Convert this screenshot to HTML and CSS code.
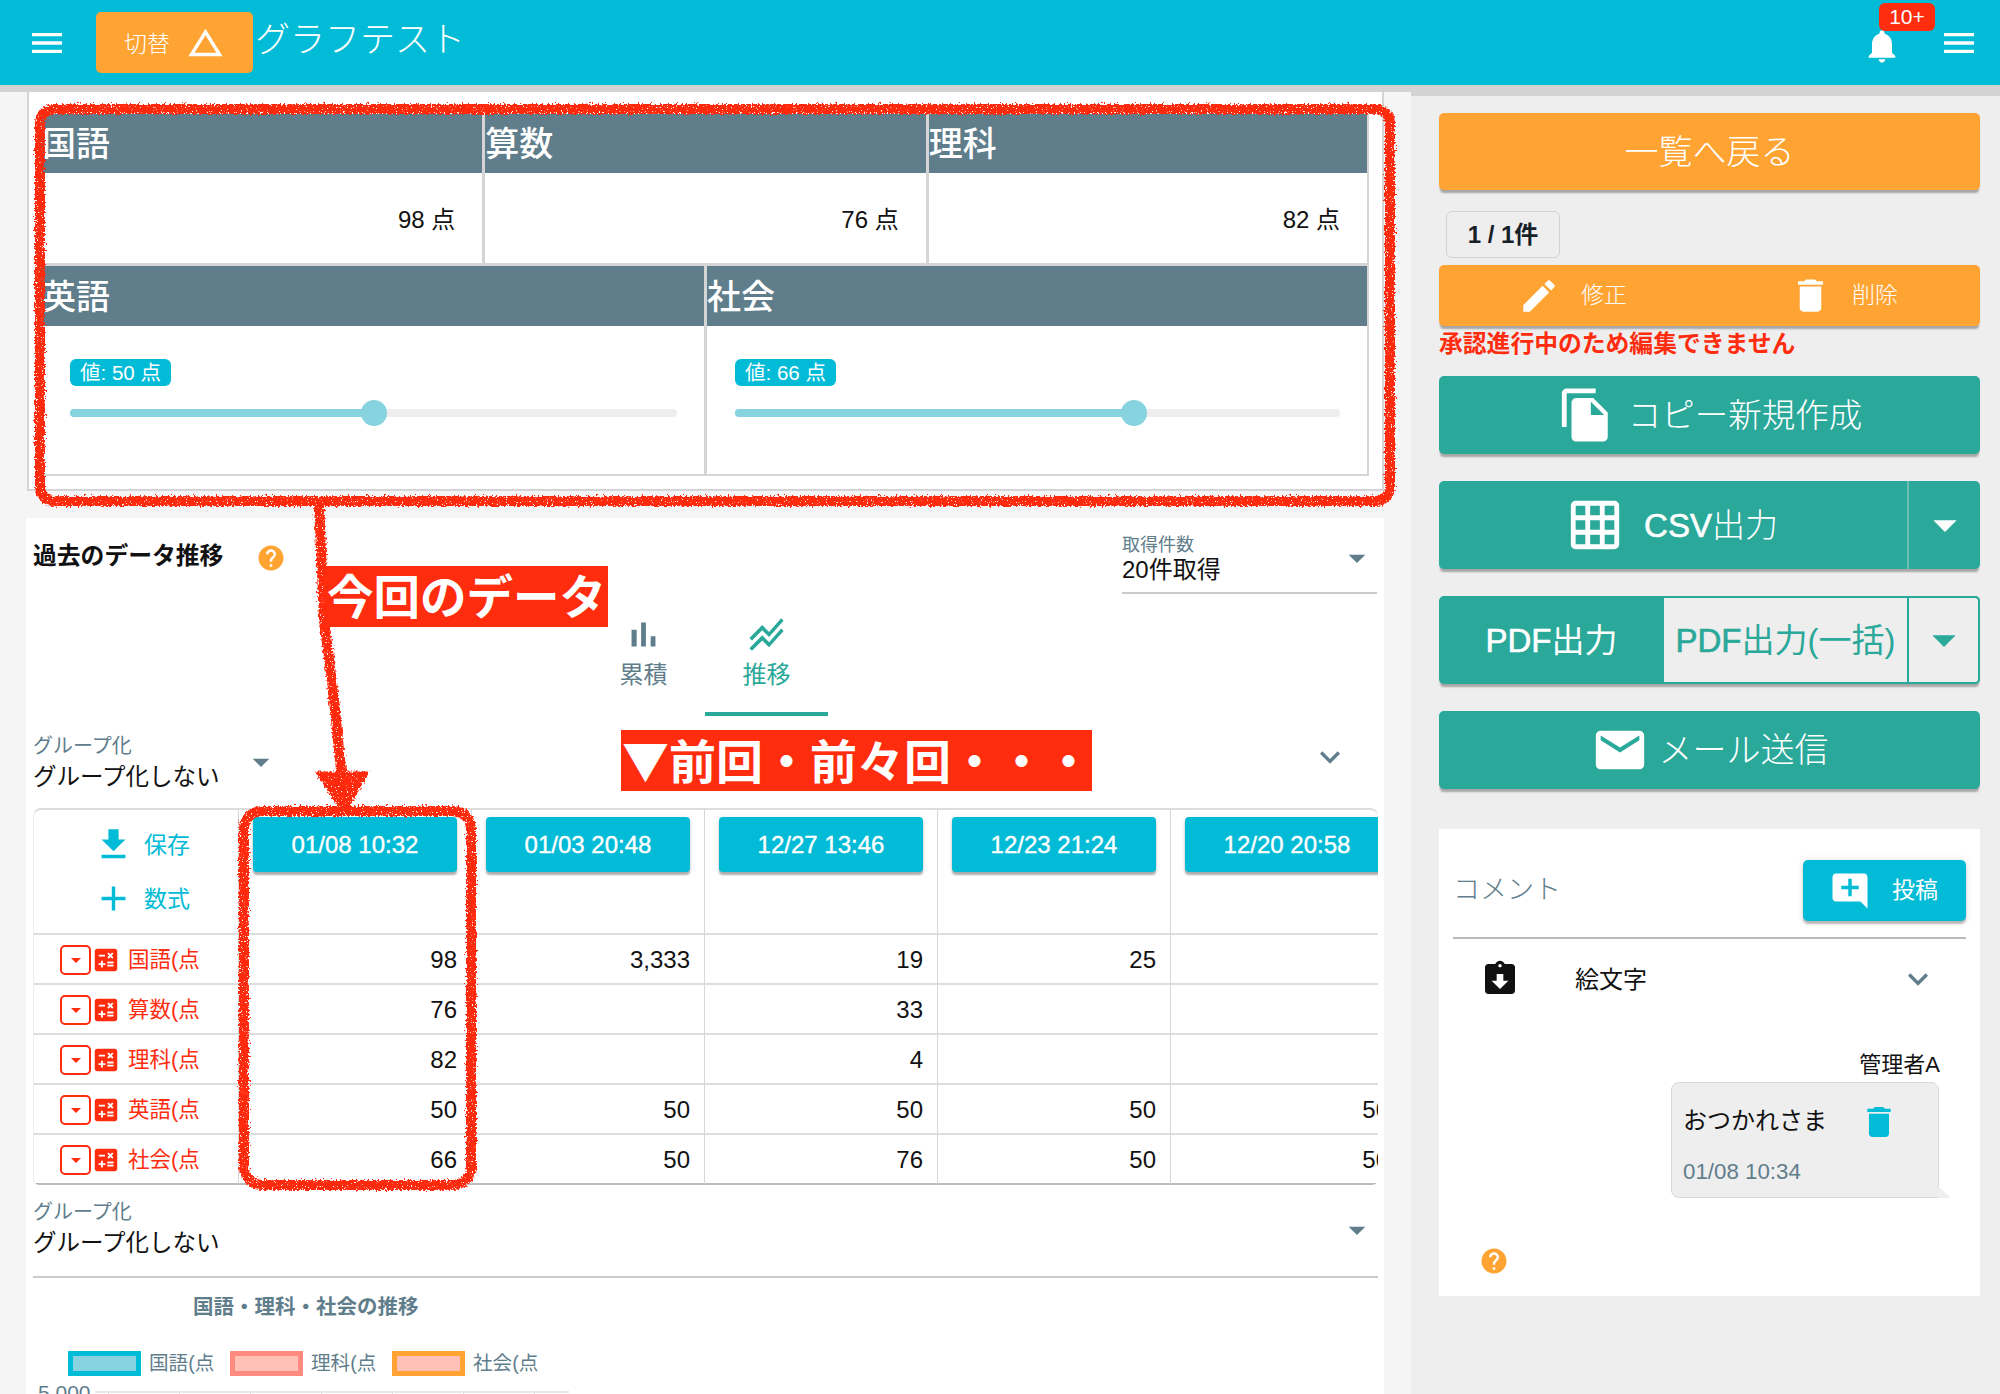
FILE: index.html
```html
<!DOCTYPE html>
<html lang="ja">
<head>
<meta charset="utf-8">
<title>グラフテスト</title>
<link rel="stylesheet" href="styles.css">
</head>
<body>
<svg class="sprite" aria-hidden="true">
  <symbol id="i-menu" viewBox="0 0 24 24"><path d="M3 18h18v-2H3v2zm0-5h18v-2H3v2zm0-7v2h18V6H3z"/></symbol>
  <symbol id="i-delta" viewBox="0 0 24 24"><path d="M12 7.77L18.39 18H5.61L12 7.77M12 4L2 20h20L12 4z"/></symbol>
  <symbol id="i-bell" viewBox="0 0 24 24"><path d="M12 22c1.1 0 2-.9 2-2h-4c0 1.1.89 2 2 2zm6-6v-5c0-3.07-1.64-5.64-4.5-6.32V4c0-.83-.67-1.5-1.5-1.5s-1.5.67-1.5 1.5v.68C7.63 5.36 6 7.92 6 11v5l-2 2v1h16v-1l-2-2z"/></symbol>
  <symbol id="i-edit" viewBox="0 0 24 24"><path d="M3 17.25V21h3.75L17.81 9.94l-3.75-3.75L3 17.25zM20.71 7.04c.39-.39.39-1.02 0-1.41l-2.34-2.34c-.39-.39-1.02-.39-1.41 0l-1.83 1.83 3.75 3.75 1.83-1.83z"/></symbol>
  <symbol id="i-delete" viewBox="0 0 24 24"><path d="M6 19c0 1.1.9 2 2 2h8c1.1 0 2-.9 2-2V7H6v12zM19 4h-3.5l-1-1h-5l-1 1H5v2h14V4z"/></symbol>
  <symbol id="i-copy" viewBox="0 0 24 24"><path d="M16 1H4c-1.1 0-2 .9-2 2v14h2V3h12V1zm-1 4l6 6v10c0 1.1-.9 2-2 2H7.99C6.89 23 6 22.1 6 21l.01-14c0-1.1.89-2 1.99-2h7zm-1 7h5.5L14 6.5V12z"/></symbol>
  <symbol id="i-grid" viewBox="0 0 24 24"><path d="M20 2H4c-1.1 0-2 .9-2 2v16c0 1.1.9 2 2 2h16c1.1 0 2-.9 2-2V4c0-1.1-.9-2-2-2zM8 20H4v-4h4v4zm0-6H4v-4h4v4zm0-6H4V4h4v4zm6 12h-4v-4h4v4zm0-6h-4v-4h4v4zm0-6h-4V4h4v4zm6 12h-4v-4h4v4zm0-6h-4v-4h4v4zm0-6h-4V4h4v4z"/></symbol>
  <symbol id="i-mail" viewBox="0 0 24 24"><path d="M20 4H4c-1.1 0-1.99.9-1.99 2L2 18c0 1.1.9 2 2 2h16c1.1 0 2-.9 2-2V6c0-1.1-.9-2-2-2zm0 4l-8 5-8-5V6l8 5 8-5v2z"/></symbol>
  <symbol id="i-drop" viewBox="0 0 24 24"><path d="M7 10l5 5 5-5z"/></symbol>
  <symbol id="i-chev" viewBox="0 0 24 24"><path d="M16.59 8.59L12 13.17 7.41 8.59 6 10l6 6 6-6z"/></symbol>
  <symbol id="i-save" viewBox="0 0 24 24"><path d="M19 9h-4V3H9v6H5l7 7 7-7zM5 18v2h14v-2H5z"/></symbol>
  <symbol id="i-add" viewBox="0 0 24 24"><path d="M19 13h-6v6h-2v-6H5v-2h6V5h2v6h6v2z"/></symbol>
  <symbol id="i-bars" viewBox="0 0 24 24"><path d="M5 9.2h3V19H5zM10.6 5h2.8v14h-2.8zm5.6 8H19v6h-2.8z"/></symbol>
  <symbol id="i-lines" viewBox="0 0 24 24"><path d="M2 19.99l7.5-7.51 4 4 7.09-7.97L22 9.92l-8.5 9.56-4-4-6 6.01L2 19.99zM3.5 15.49l6-6.01 4 4L22 3.92l-1.41-1.41-7.09 7.97-4-4L2 13.99l1.5 1.5z"/></symbol>
  <symbol id="i-calc" viewBox="0 0 24 24"><path d="M19 3H5c-1.1 0-2 .9-2 2v14c0 1.1.9 2 2 2h14c1.1 0 2-.9 2-2V5c0-1.1-.9-2-2-2zm-5.97 4.06L14.09 6l1.41 1.41L16.91 6l1.06 1.06-1.41 1.41 1.41 1.41-1.06 1.06-1.41-1.4-1.41 1.41-1.06-1.06 1.41-1.41-1.41-1.42zm-6.78.66h5v1.5h-5v-1.5zM11.5 16h-2v2H8v-2H6v-1.5h2v-2h1.5v2h2V16zm6.5 1.25h-5v-1.5h5v1.5zm0-2.5h-5v-1.5h5v1.5z"/></symbol>
  <symbol id="i-help" viewBox="0 0 24 24"><path d="M12 2C6.48 2 2 6.48 2 12s4.48 10 10 10 10-4.48 10-10S17.52 2 12 2zm1 17h-2v-2h2v2zm2.07-7.75l-.9.92C13.45 12.9 13 13.5 13 15h-2v-.5c0-1.1.45-2.1 1.17-2.83l1.24-1.26c.37-.36.59-.86.59-1.41 0-1.1-.9-2-2-2s-2 .9-2 2H8c0-2.21 1.79-4 4-4s4 1.79 4 4c0 .88-.36 1.68-.93 2.25z"/></symbol>
  <symbol id="i-comment" viewBox="0 0 24 24"><path d="M21.99 4c0-1.1-.89-2-1.99-2H4c-1.1 0-2 .9-2 2v12c0 1.1.9 2 2 2h14l4 4-.01-18zM17 11h-4v4h-2v-4H7V9h4V5h2v4h4v2z"/></symbol>
  <symbol id="i-clip" viewBox="0 0 24 24"><path d="M19 3h-4.18C14.4 1.84 13.3 1 12 1c-1.3 0-2.4.84-2.82 2H5c-1.1 0-2 .9-2 2v14c0 1.1.9 2 2 2h14c1.1 0 2-.9 2-2V5c0-1.1-.9-2-2-2zm-7 0c.55 0 1 .45 1 1s-.45 1-1 1-1-.45-1-1 .45-1 1-1zm0 15l-5-5h3V9h4v4h3l-5 5z"/></symbol>
</svg>

<header class="topbar">
  <svg class="ic ic-menu"><use href="#i-menu"/></svg>
  <button class="switch"><span class="switch-text">切替</span><svg class="ic ic-delta"><use href="#i-delta"/></svg></button>
  <h1 class="app-title">グラフテスト</h1>
  <div class="bell"><svg class="ic ic-bell"><use href="#i-bell"/></svg><span class="bell-badge">10+</span></div>
  <svg class="ic ic-menu ic-menu-right"><use href="#i-menu"/></svg>
</header>

<div class="page">
  <main class="main">
    <section class="scores">
      <div class="score-row score-row-3">
        <div class="score-cell"><h2 class="score-head">国語</h2><div class="score-value">98 点</div></div>
        <div class="score-cell"><h2 class="score-head">算数</h2><div class="score-value">76 点</div></div>
        <div class="score-cell"><h2 class="score-head">理科</h2><div class="score-value">82 点</div></div>
      </div>
      <div class="score-row score-row-2">
        <div class="score-cell">
          <h2 class="score-head score-head-tall">英語</h2>
          <div class="slider-box">
            <span class="slider-badge">値: 50 点</span>
            <div class="slider"><div class="slider-fill" style="width:50%"></div><div class="slider-thumb" style="left:50%"></div></div>
          </div>
        </div>
        <div class="score-cell">
          <h2 class="score-head score-head-tall">社会</h2>
          <div class="slider-box">
            <span class="slider-badge">値: 66 点</span>
            <div class="slider"><div class="slider-fill" style="width:66%"></div><div class="slider-thumb" style="left:66%"></div></div>
          </div>
        </div>
      </div>
    </section>

    <section class="history">
      <div class="history-top">
        <h2 class="history-title">過去のデータ推移</h2>
        <svg class="ic ic-help"><use href="#i-help"/></svg>
        <div class="select select-count">
          <div><div class="select-label select-label-sm">取得件数</div><div class="select-value">20件取得</div></div>
          <svg class="ic ic-drop ic-drop-count"><use href="#i-drop"/></svg>
        </div>
      </div>

      <div class="tabs">
        <div class="tab"><svg class="ic ic-tab"><use href="#i-bars"/></svg><span>累積</span></div>
        <div class="tab tab-active"><svg class="ic ic-tab"><use href="#i-lines"/></svg><span>推移</span></div>
      </div>

      <div class="group-row">
        <div class="group-select">
          <div class="select-label">グループ化</div>
          <div class="select-value select-value-group">グループ化しない</div>
        </div>
        <svg class="ic ic-drop ic-drop-group"><use href="#i-drop"/></svg>
        <svg class="ic ic-chev ic-chev-table"><use href="#i-chev"/></svg>
      </div>

      <div class="table-wrap">
        <table class="data-table">
          <colgroup><col class="col-first"><col class="col-data"><col class="col-data"><col class="col-data"><col class="col-data"><col class="col-data"></colgroup>
          <thead>
            <tr>
              <th class="tools-cell">
                <div class="tool"><svg class="ic ic-tool"><use href="#i-save"/></svg><span>保存</span></div>
                <div class="tool"><svg class="ic ic-tool"><use href="#i-add"/></svg><span>数式</span></div>
              </th>
              <th><span class="date-btn">01/08 10:32</span></th>
              <th><span class="date-btn">01/03 20:48</span></th>
              <th><span class="date-btn">12/27 13:46</span></th>
              <th><span class="date-btn">12/23 21:24</span></th>
              <th><span class="date-btn">12/20 20:58</span></th>
            </tr>
          </thead>
          <tbody>
            <tr><th class="row-head"><div class="row-label"><span class="row-drop"><svg class="ic ic-rowdrop"><use href="#i-drop"/></svg></span><svg class="ic ic-calc"><use href="#i-calc"/></svg><span class="row-name">国語(点</span></div></th><td>98</td><td>3,333</td><td>19</td><td>25</td><td></td></tr>
            <tr><th class="row-head"><div class="row-label"><span class="row-drop"><svg class="ic ic-rowdrop"><use href="#i-drop"/></svg></span><svg class="ic ic-calc"><use href="#i-calc"/></svg><span class="row-name">算数(点</span></div></th><td>76</td><td></td><td>33</td><td></td><td></td></tr>
            <tr><th class="row-head"><div class="row-label"><span class="row-drop"><svg class="ic ic-rowdrop"><use href="#i-drop"/></svg></span><svg class="ic ic-calc"><use href="#i-calc"/></svg><span class="row-name">理科(点</span></div></th><td>82</td><td></td><td>4</td><td></td><td></td></tr>
            <tr><th class="row-head"><div class="row-label"><span class="row-drop"><svg class="ic ic-rowdrop"><use href="#i-drop"/></svg></span><svg class="ic ic-calc"><use href="#i-calc"/></svg><span class="row-name">英語(点</span></div></th><td>50</td><td>50</td><td>50</td><td>50</td><td>50</td></tr>
            <tr><th class="row-head"><div class="row-label"><span class="row-drop"><svg class="ic ic-rowdrop"><use href="#i-drop"/></svg></span><svg class="ic ic-calc"><use href="#i-calc"/></svg><span class="row-name">社会(点</span></div></th><td>66</td><td>50</td><td>76</td><td>50</td><td>50</td></tr>
          </tbody>
        </table>
      </div>

      <div class="select select-chart">
        <div><div class="select-label">グループ化</div><div class="select-value select-value-chart">グループ化しない</div></div>
        <svg class="ic ic-drop ic-drop-chart"><use href="#i-drop"/></svg>
      </div>

      <div class="chart">
        <div class="chart-title">国語・理科・社会の推移</div>
        <div class="legend">
          <div class="legend-item"><i class="swatch swatch-a"></i><span>国語(点</span></div>
          <div class="legend-item"><i class="swatch swatch-b"></i><span>理科(点</span></div>
          <div class="legend-item"><i class="swatch swatch-c"></i><span>社会(点</span></div>
        </div>
        <div class="axis-row"><span class="axis-label">5,000</span><div class="axis-line"></div></div>
      </div>
    </section>
  </main>

  <aside class="side">
    <button class="btn btn-orange btn-back"><span>一覧へ戻る</span></button>
    <div class="counter">1 / 1件</div>
    <div class="btn btn-orange btn-edit">
      <span class="edit-part edit-left"><svg class="ic ic-edit"><use href="#i-edit"/></svg><span class="btn-text">修正</span></span>
      <span class="edit-part edit-right"><svg class="ic ic-del"><use href="#i-delete"/></svg><span class="btn-text">削除</span></span>
    </div>
    <div class="locked">承認進行中のため編集できません</div>
    <button class="btn btn-teal btn-copy"><svg class="ic ic-big ic-copy"><use href="#i-copy"/></svg><span class="btn-text">コピー新規作成</span></button>
    <div class="btn btn-teal btn-split">
      <span class="split-main"><svg class="ic ic-big"><use href="#i-grid"/></svg><span class="btn-text"><b class="semi">CSV</b>出力</span></span>
      <span class="split-arrow"><svg class="ic ic-arrow"><use href="#i-drop"/></svg></span>
    </div>
    <div class="btn btn-teal btn-split btn-pdf">
      <span class="pdf-one"><span class="btn-text"><b class="semi">PDF</b>出力</span></span>
      <span class="pdf-all"><span class="btn-text"><b class="semi">PDF</b>出力(一括)</span></span>
      <span class="split-arrow split-arrow-pdf"><svg class="ic ic-arrow"><use href="#i-drop"/></svg></span>
    </div>
    <button class="btn btn-teal btn-mail"><svg class="ic ic-big"><use href="#i-mail"/></svg><span class="btn-text">メール送信</span></button>

    <section class="comments">
      <div class="comments-head">
        <span class="comments-title">コメント</span>
        <button class="post-btn"><svg class="ic ic-post"><use href="#i-comment"/></svg><span class="btn-text">投稿</span></button>
      </div>
      <div class="emoji-row">
        <svg class="ic ic-clip"><use href="#i-clip"/></svg>
        <span class="emoji-label">絵文字</span>
        <svg class="ic ic-chev ic-chev-emoji"><use href="#i-chev"/></svg>
      </div>
      <div class="author">管理者A</div>
      <div class="bubble">
        <div class="bubble-main"><span class="bubble-text">おつかれさま</span><svg class="ic ic-bubble-del"><use href="#i-delete"/></svg></div>
        <div class="bubble-date">01/08 10:34</div>
      </div>
      <svg class="ic ic-help ic-help-side"><use href="#i-help"/></svg>
    </section>
  </aside>
</div>

<svg class="marks" viewBox="0 0 2000 1394" aria-hidden="true">
  <defs>
    <filter id="rough" filterUnits="userSpaceOnUse" x="0" y="0" width="2000" height="1394">
      <feTurbulence type="fractalNoise" baseFrequency="0.5" numOctaves="2" seed="4" result="wobble"/>
      <feDisplacementMap in="SourceGraphic" in2="wobble" scale="7" xChannelSelector="R" yChannelSelector="G" result="drawn"/>
      <feTurbulence type="fractalNoise" baseFrequency="0.8" numOctaves="1" seed="9"/>
      <feColorMatrix values="0 0 0 0 0  0 0 0 0 0  0 0 0 0 0  0 0 0 12 -7.8" result="specks"/>
      <feComposite in="drawn" in2="specks" operator="out"/>
    </filter>
  </defs>
  <g class="marks-group" filter="url(#rough)">
    <rect class="mark-line mark-panel" x="40" y="109" width="1350" height="392" rx="14"/>
    <rect class="mark-line mark-col" x="244" y="811" width="227" height="374" rx="18"/>
    <path class="mark-line mark-arrow" d="M319 504L324 620L333 690L342 780"/>
    <path class="mark-head" d="M318 773L367 773L347 808L340 808Z"/>
  </g>
</svg>
<div class="tag tag-now">今回のデータ</div>
<div class="tag tag-prev">▼前回・前々回・・・</div>
</body>
</html>
```
FILE: styles.css
```css
* { box-sizing: border-box; }
html, body { margin: 0; padding: 0; }
body {
  width: 2000px;
  height: 1394px;
  overflow: hidden;
  position: relative;
  background: #f5f5f5;
  color: #111;
  font-family: "Liberation Sans", "Noto Sans CJK JP", sans-serif;
  font-size: 24px;
}
h1, h2 { margin: 0; font-weight: 400; }
button { font: inherit; border: 0; padding: 0; }
.sprite { display: none; }
.ic { display: block; flex: none; fill: currentColor; }
.semi { font-weight: 400; -webkit-text-stroke: .6px currentColor; }

/* top bar */
.topbar {
  height: 85px;
  background: #02bbd6;
  color: #fff;
  display: flex;
  align-items: center;
  padding-left: 27px;
}
.ic-menu { width: 40px; height: 40px; }
.switch {
  width: 157px;
  height: 61px;
  margin-left: 29px;
  background: #ffa433;
  color: #fff;
  border-radius: 5px;
  display: flex;
  align-items: center;
  padding-left: 28px;
  font-size: 23px;
  font-weight: 300;
}
.switch-text { margin-bottom: 2px; }
.ic-delta { width: 41px; height: 41px; margin-left: 15px; }
.app-title {
  margin: -6px 0 0 2px;
  font-size: 35px;
  font-weight: 300;
  line-height: 50px;
}
.bell { position: relative; margin-left: auto; width: 40px; height: 40px; margin-right: 37px; margin-top: 6px; }
.ic-bell { width: 40px; height: 40px; }
.bell-badge {
  position: absolute;
  left: 17px;
  top: -23px;
  width: 56px;
  height: 28px;
  background: #ff2c0e;
  border-radius: 6px;
  font-size: 21px;
  line-height: 28px;
  text-align: center;
}
.ic-menu-right { margin-right: 21px; width: 40px; }

/* page columns */
.page { display: flex; height: 1309px; }
.main { width: 1411px; flex: none; border-top: 7px solid #d3d3d3; }
.side {
  flex: 1;
  background: #eee;
  border-top: 11px solid #d3d3d3;
  padding: 17px 20px 0 28px;
}

/* score panel */
.scores {
  width: 1357px;
  margin-left: 27px;
  padding: 22px 13px 13px 10px;
  background: #fff;
  border: 2px solid #d5d5d5;
  border-top: 0;
}
.score-row { display: grid; }
.score-row-3 { grid-template-columns: 1fr 1fr 1fr; border-bottom: 3px solid #d5d5d5; }
.score-row-2 { grid-template-columns: 1fr 1fr; border-bottom: 2px solid #d5d5d5; }
.score-cell { border-left: 3px solid #d5d5d5; }
.score-cell:last-child { border-right: 2px solid #d5d5d5; }
.score-head {
  height: 59px;
  background: #607d8b;
  color: #fff;
  font-size: 34px;
  font-weight: 500;
  line-height: 60px;
}
.score-head-tall { height: 60px; line-height: 62px; }
.score-value {
  height: 90px;
  line-height: 93px;
  text-align: right;
  padding-right: 27px;
  font-size: 24px;
}
.slider-box { height: 148px; padding: 33px 27px 0 28px; }
.slider-badge {
  display: block;
  width: 101px;
  height: 27px;
  background: #02bbd6;
  color: #fff;
  border-radius: 6px;
  font-size: 20.5px;
  line-height: 27px;
  text-align: center;
}
.slider {
  position: relative;
  height: 8px;
  margin-top: 23px;
  border-radius: 4px;
  background: #eee;
}
.slider-fill { height: 8px; border-radius: 4px; background: #87d3df; }
.slider-thumb {
  position: absolute;
  top: -9px;
  width: 26px;
  height: 26px;
  margin-left: -13px;
  border-radius: 50%;
  background: #87d3df;
}

/* history card */
.history {
  width: 1358px;
  height: 876px;
  margin: 27px 0 0 26px;
  padding: 0 6px 0 7px;
  background: #fff;
  overflow: hidden;
}
.history-top { display: flex; height: 76px; }
.history-title { font-size: 23.8px; font-weight: 700; line-height: 30px; margin-top: 23px; }
.ic-help { width: 30px; height: 30px; color: #ffa433; }
.history-top .ic-help { margin: 25px 0 0 33px; }
.select { display: flex; justify-content: space-between; border-bottom: 2px solid #ccc; }
.select-count { width: 255px; margin-left: auto; height: 76px; padding-top: 17px; margin-right: 1px; }
.select-label { font-size: 20px; line-height: 20px; color: #607d8b; }
.select-label-sm { font-size: 18px; }
.select-value { font-size: 24px; line-height: 30px; color: #111; }
.select-value-group { font-size: 23.5px; margin-top: 6px; }
.ic-drop { width: 40px; height: 40px; color: #607d8b; }
.ic-drop-count { margin-top: 3px; }

.tabs { display: flex; margin: 20px 0 0 549px; }
.tab {
  width: 123px;
  height: 102px;
  display: flex;
  flex-direction: column;
  align-items: center;
  color: #607d8b;
  font-size: 24px;
  line-height: 30px;
}
.tab span { margin-top: 5px; }
.ic-tab { width: 41px; height: 41px; }
.tab-active { color: #2aa89a; border-bottom: 4px solid #2aa89a; }

.group-row { display: flex; height: 92px; padding-top: 20px; }
.group-select { width: 208px; }
.ic-drop-group { margin-top: 6px; }
.ic-chev { width: 40px; height: 40px; color: #607d8b; }
.ic-chev-table { margin: 1px 28px 0 auto; }

/* table */
.table-wrap {
  width: 1345px;
  height: 377px;
  overflow: hidden;
  border-top: 2px solid #ddd;
  border-left: 1px solid #eee;
  border-radius: 8px 8px 6px 6px;
}
.data-table { border-collapse: separate; border-spacing: 0; table-layout: fixed; width: 1369px; }
.col-first { width: 204px; }
.col-data { width: 233px; }
.data-table th, .data-table td {
  padding: 0;
  font-weight: 400;
  border-bottom: 2px solid #ddd;
}
.data-table thead th { height: 125px; vertical-align: top; padding-top: 7px; border-left: 1px solid #d8d8d8; text-align: center; }
.data-table thead th.tools-cell { border-left: 0; padding: 6px 0 0 67px; }
.data-table tbody tr:last-child th, .data-table tbody tr:last-child td { border-bottom-color: #bbb; }
.data-table td {
  height: 50px;
  border-left: 1px solid #d8d8d8;
  padding: 1px 14px 0 0;
  text-align: right;
  font-size: 24px;
}
.tool { display: flex; align-items: center; height: 54px; color: #02bbd6; font-size: 23px; }
.tool span { margin-left: -1px; }
.ic-tool { width: 41px; height: 41px; margin: 2px 11px 0 -8px; }
.date-btn {
  display: block;
  width: 204px;
  height: 55px;
  margin-left: 14px;
  background: #02bbd6;
  color: #fff;
  border-radius: 4px;
  line-height: 55px;
  box-shadow: 0 3px 2px rgba(0, 0, 0, .3), 0 0 6px rgba(0, 0, 0, .08);
  font-size: 24px;
  -webkit-text-stroke: .4px #fff;
}
.row-head { height: 50px; }
.row-label { display: flex; align-items: center; padding: 2px 0 0 26px; color: #ff2c0e; font-size: 21.5px; }
.row-name { margin-bottom: 6px; }
.row-drop {
  width: 31px;
  height: 30px;
  border: 2px solid #ff2c0e;
  border-radius: 5px;
  display: flex;
  align-items: center;
  justify-content: center;
  background: #fff;
}
.ic-rowdrop { width: 24px; height: 24px; }
.ic-calc { width: 30px; height: 30px; margin: 0 7px 0 0; }

/* chart */
.select-chart { width: 1345px; height: 76px; margin-top: 17px; }
.select-value-chart { margin-top: 6px; font-size: 23.5px; }
.ic-drop-chart { margin: 8px 1px 0 0; }
.chart-title { margin: 16px 0 0 160px; font-size: 20.5px; font-weight: 700; line-height: 26px; color: #607d8b; }
.legend { display: flex; margin: 31px 0 0 35px; }
.legend-item { width: 162px; display: flex; align-items: center; color: #607d8b; font-size: 19.6px; line-height: 25px; }
.swatch { width: 73px; height: 25px; border: 5px solid; margin-right: 8px; flex: none; }
.swatch-a { border-color: #02bbd6; background: #87d3df; }
.swatch-b { border-color: #ff8a80; background: #ffc0b5; }
.swatch-c { border-color: #ffa433; background: #ffc0b5; }
.axis-row { display: flex; margin: 4px 0 0 5px; color: #607d8b; font-size: 21px; line-height: 26px; }
.axis-label { width: 57px; }
.axis-line {
  width: 474px;
  height: 7px;
  margin-top: 11px;
  border-top: 2px solid #e6e6e6;
  background: repeating-linear-gradient(90deg, #ddd 0 1px, transparent 1px 71px) 13px 0;
}

/* sidebar buttons */
.btn {
  display: flex;
  width: 541px;
  color: #fff;
  border-radius: 5px;
  align-items: center;
  justify-content: center;
  box-shadow: 0 4px 2px -1px rgba(0, 0, 0, .3);
  font-weight: 300;
}
.btn-text { margin-bottom: 5px; }
.btn-orange { background: #ffa433; }
.btn-teal { background: #2aa89a; }
.btn-back { height: 77px; font-size: 34px; padding-bottom: 5px; }
.counter {
  width: 114px;
  height: 47px;
  margin: 21px 0 0 7px;
  border: 1px solid #d2d2d2;
  border-radius: 6px;
  font-weight: 700;
  font-size: 24px;
  line-height: 45px;
  text-align: center;
  color: #162028;
}
.btn-edit { height: 61px; margin-top: 7px; justify-content: flex-start; font-size: 23px; }
.edit-part { display: flex; align-items: center; }
.edit-left { margin-left: 79px; }
.edit-right { margin-left: 162px; }
.ic-edit { width: 42px; height: 42px; margin-right: 21px; }
.ic-del { width: 43px; height: 43px; margin-right: 20px; }
.locked { height: 26px; margin-top: 5px; color: #ff2c0e; font-size: 23.8px; font-weight: 700; line-height: 26px; white-space: nowrap; }
.ic-big { width: 58px; height: 58px; }
.btn-copy { height: 78px; margin-top: 19px; font-size: 33.5px; }
.btn-copy .ic-big { margin-right: 13px; }
.btn-split { height: 88px; margin-top: 27px; font-size: 33px; align-items: stretch; }
.split-main { flex: 1; display: flex; align-items: center; justify-content: center; padding-right: 2px; }
.split-main .ic-big { margin-right: 20px; }
.split-arrow { width: 73px; border-left: 2px solid #6dbdb4; display: flex; align-items: center; justify-content: center; }
.ic-arrow { width: 56px; height: 56px; }
.btn-pdf { font-weight: 400; }
.pdf-one { width: 225px; display: flex; align-items: center; justify-content: center; }
.pdf-all {
  width: 243px;
  display: flex;
  align-items: center;
  justify-content: center;
  background: #eee;
  color: #2aa89a;
  border-top: 2px solid #2aa89a;
  border-bottom: 2px solid #2aa89a;
  white-space: nowrap;
}
.split-arrow-pdf {
  background: #eee;
  color: #2aa89a;
  border: 2px solid #2aa89a;
  border-radius: 0 5px 5px 0;
}
.btn-mail { height: 78px; margin-top: 27px; font-size: 34px; }
.btn-mail .ic-big { margin-right: 10px; }

/* comments */
.comments { width: 541px; height: 467px; margin-top: 40px; padding: 0 14px; background: #fff; }
.comments-head {
  display: flex;
  justify-content: space-between;
  height: 110px;
  padding-top: 31px;
  border-bottom: 2px solid #bbb;
}
.comments-title { margin-top: 14px; font-size: 27px; line-height: 32px; color: #607d8b; font-weight: 300; }
.post-btn {
  width: 163px;
  height: 61px;
  background: #02bbd6;
  color: #fff;
  border-radius: 5px;
  display: flex;
  align-items: center;
  padding-left: 26px;
  font-size: 23px;
  box-shadow: 0 3px 2px rgba(0, 0, 0, .25), 0 0 8px rgba(0, 0, 0, .1);
}
.ic-post { width: 42px; height: 42px; margin-right: 21px; }
.emoji-row { display: flex; align-items: center; height: 80px; padding: 0 28px 0 27px; }
.ic-clip { width: 40px; height: 40px; color: #111; }
.emoji-label { margin: 0 0 4px 55px; font-size: 24px; }
.ic-chev-emoji { margin-left: auto; }
.author { margin: 33px 26px 0 0; text-align: right; font-size: 22px; line-height: 26px; }
.bubble {
  position: relative;
  width: 268px;
  height: 116px;
  margin: 4px 27px 0 auto;
  padding: 22px 0 0 11px;
  background: #eee;
  border: 1px solid #d8d8d8;
  border-radius: 8px 8px 0 8px;
}
.bubble::after {
  content: "";
  position: absolute;
  left: 266px;
  bottom: -1px;
  border-left: 13px solid #eee;
  border-top: 12px solid transparent;
}
.bubble-main { display: flex; align-items: center; font-size: 24px; height: 34px; }
.bubble-text { margin-bottom: 7px; }
.ic-bubble-del { width: 40px; height: 40px; margin-left: 32px; color: #02bbd6; }
.bubble-date { margin-top: 18px; font-size: 22.3px; line-height: 30px; color: #607d8b; }
.ic-help-side { margin: 48px 0 0 26px; }

/* review annotations */
.marks { position: absolute; left: 0; top: 0; width: 2000px; height: 1394px; pointer-events: none; }
.mark-line { fill: none; stroke: #ff2c0e; }
.mark-panel { stroke-width: 10px; }
.mark-col { stroke-width: 10px; }
.mark-arrow { stroke-width: 10px; }
.mark-head { fill: #ff2c0e; stroke: #ff2c0e; stroke-width: 3px; }
.tag {
  position: absolute;
  background: #ff2c0e;
  color: #fff;
  font-family: "Noto Sans CJK JP", sans-serif;
  font-weight: 700;
  white-space: nowrap;
}
.tag-now { left: 324px; top: 566px; width: 284px; height: 61px; font-size: 46.5px; line-height: 56px; padding-left: 3px; }
.tag-prev { left: 621px; top: 730px; width: 471px; height: 61px; font-size: 47px; line-height: 58px; padding-left: 1px; }
```
